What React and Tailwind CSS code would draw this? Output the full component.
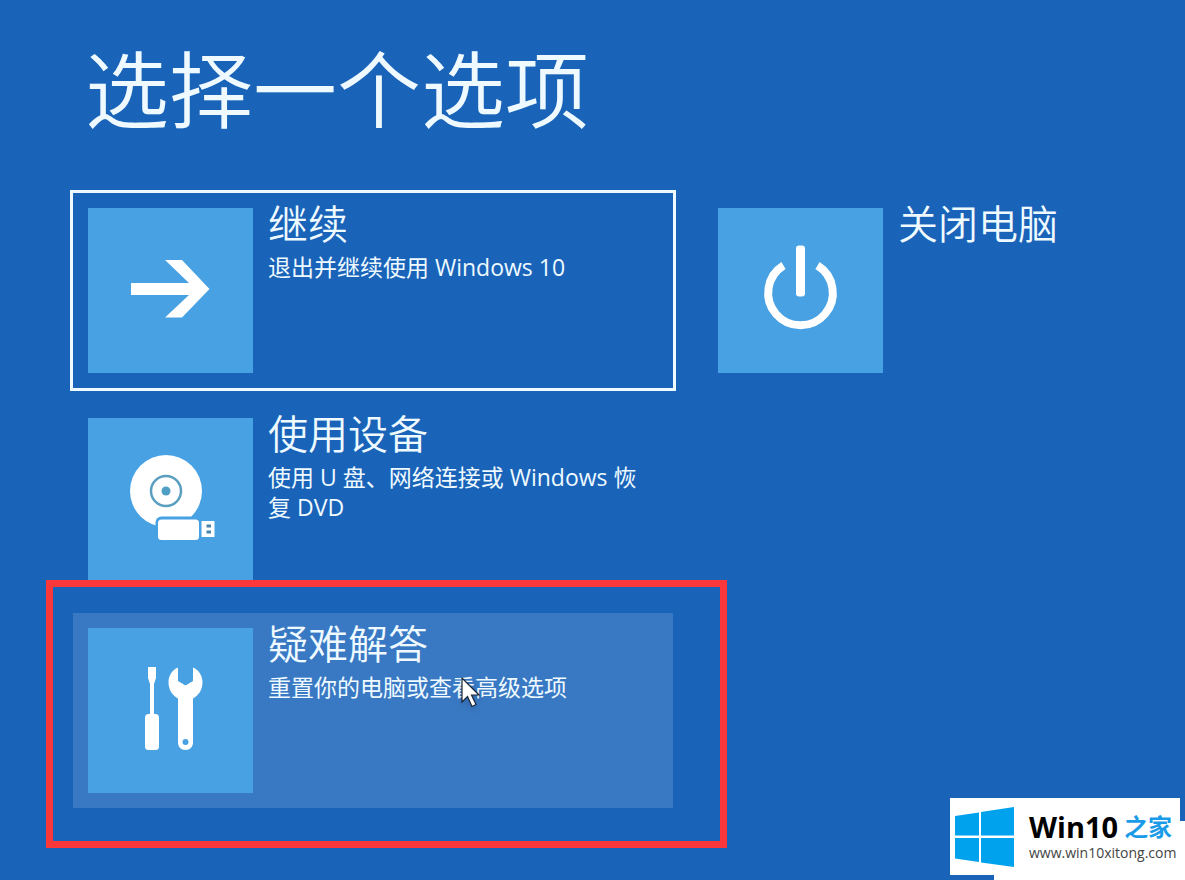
import React from "react";

const ArrowIcon = () => (
  <svg viewBox="0 0 165 165" className="w-full h-full" fill="#fff" aria-hidden="true">
    <path d="M43 75H101L77 52H94L121.500 81L94 109.500H77L101 87H43Z" />
  </svg>
);

const PowerIcon = () => (
  <svg viewBox="0 0 165 165" className="w-full h-full" fill="none" stroke="#fff" aria-hidden="true">
    <path d="M65.500 57.500A32.300 32.300 0 1 0 99.500 57.500" strokeWidth="8" />
    <rect x="78" y="37.500" width="9" height="51" rx="3" fill="#fff" stroke="none" />
  </svg>
);

const DeviceIcon = () => (
  <svg viewBox="0 0 165 165" className="w-full h-full" aria-hidden="true">
    <circle cx="78" cy="73" r="36" fill="#fff" />
    <circle cx="78" cy="73" r="15" fill="none" stroke="#5a9fc0" strokeWidth="2.500" />
    <circle cx="78" cy="73" r="4.500" fill="#4f9fc4" />
    <rect x="67.500" y="98.500" width="46" height="26" rx="6" fill="#47a1e3" />
    <rect x="70" y="101.500" width="41" height="20.500" rx="3.500" fill="#fff" />
    <path d="M113.500 103H126.500V119H113.500Z" fill="#fff" />
    <path d="M118.500 106.500H123V109.500H118.500ZM118.500 112.500H123V115.500H118.500Z" fill="#4a86ab" />
  </svg>
);

const ToolsIcon = () => (
  <svg viewBox="0 0 165 165" className="w-full h-full" fill="#fff" aria-hidden="true">
    <path d="M60 39H68V50L66 56V86H67.500Q71 86 71 90V118.500Q71 122 67.500 122H60.500Q57 122 57 118.500V90Q57 86 60.500 86H62V56L60 50Z" />
    <path
      fillRule="evenodd"
      d="M90 39.500V53L97.500 57.500L105 53V39.500C111 42 114.500 48 114.500 54C114.500 62 110.500 67.500 105 70.500V114.500C105 119 102 122 97.500 122C93 122 90 119 90 114.500V70.500C84.500 67.500 80.500 62 80.500 54C80.500 48 84 42 90 39.500ZM97.500 111A3 3 0 1 0 97.500 117A3 3 0 1 0 97.500 111Z"
    />
  </svg>
);

const Cursor = () => (
  <svg viewBox="0 0 20 32" className="absolute left-[388px] top-16 w-5 h-8 drop-shadow-md" aria-hidden="true">
    <path
      d="M1 1V25L6.500 19.500L11 29.500L15 27.500L10.500 18H18Z"
      fill="#fff"
      stroke="#1b2433"
      strokeWidth="1.200"
    />
  </svg>
);

const WindowsLogo = () => (
  <svg viewBox="0 0 60 60" className="w-[60px] h-[60px] flex-shrink-0" fill="#00a2ed" aria-hidden="true">
    <path d="M0 9L24 5.500V28.500H0ZM26 5L59 0V28.500H26ZM0 31H24V55L0 51.500ZM26 31H59V60L26 55.500Z" />
  </svg>
);

const Option = ({ title, description, icon, className = "", children }) => (
  <div className={`relative ${className}`}>
    <button type="button" className="w-full flex items-start gap-[15px] p-[15px] text-left cursor-pointer">
      <span className="w-[165px] h-[165px] flex-shrink-0 bg-[#47a1e3]">{icon}</span>
      <span className="min-w-0 -mt-2">
        <span className="block mb-1 text-[40px] leading-[48px] font-[350]">{title}</span>
        {description && <span className="block pr-4 text-[23px] leading-[30px]">{description}</span>}
      </span>
    </button>
    {children}
  </div>
);

const App = () => {
  return (
    <div className="relative min-h-screen overflow-hidden bg-[#1963b9] text-[#eefaff] font-['Open_Sans','Noto_Sans_CJK_SC',sans-serif]">
      <main className="pl-[73px] pt-10 pb-[72px]">
        <h1 className="pl-3 mb-[53px] text-[84px] leading-[100px] font-[350]">选择一个选项</h1>
        <div className="grid grid-cols-[minmax(0,600px)_minmax(0,1fr)] gap-x-[30px] items-start">
          <div className="flex flex-col gap-[15px]">
            <Option
              title="继续"
              description="退出并继续使用 Windows 10"
              icon={<ArrowIcon />}
              className="outline-3 outline-[#eefaff]"
            />
            <Option
              title="使用设备"
              description="使用 U 盘、网络连接或 Windows 恢复 DVD"
              icon={<DeviceIcon />}
            />
            <Option
              title="疑难解答"
              description="重置你的电脑或查看高级选项"
              icon={<ToolsIcon />}
              className="bg-[#3978c3]"
            >
              {/* 强调框 */}
              <div className="absolute -left-[27px] -top-[33px] -right-[54px] -bottom-10 border-[7px] border-[#fb373a] pointer-events-none" />
              <Cursor />
            </Option>
          </div>
          <Option title="关闭电脑" icon={<PowerIcon />} />
        </div>
      </main>

      {/* 右下角站点标识 */}
      <div className="absolute right-0 bottom-0 w-[191px] h-[59px] bg-white" />
      <a
        href="#"
        className="absolute right-[5px] bottom-[5px] w-[230px] h-[77px] flex items-center gap-[14px] pl-[5px] bg-white"
      >
        <WindowsLogo />
        <span className="whitespace-nowrap">
          <span className="flex items-center gap-1.5 text-[29px] leading-8 font-bold text-black">
            Win10 <span className="text-[24px] text-[#1a9be8]">之家</span>
          </span>
          <span className="block text-[14px] leading-5 text-[#444]">www.win10xitong.com</span>
        </span>
      </a>
    </div>
  );
};

export default App;
